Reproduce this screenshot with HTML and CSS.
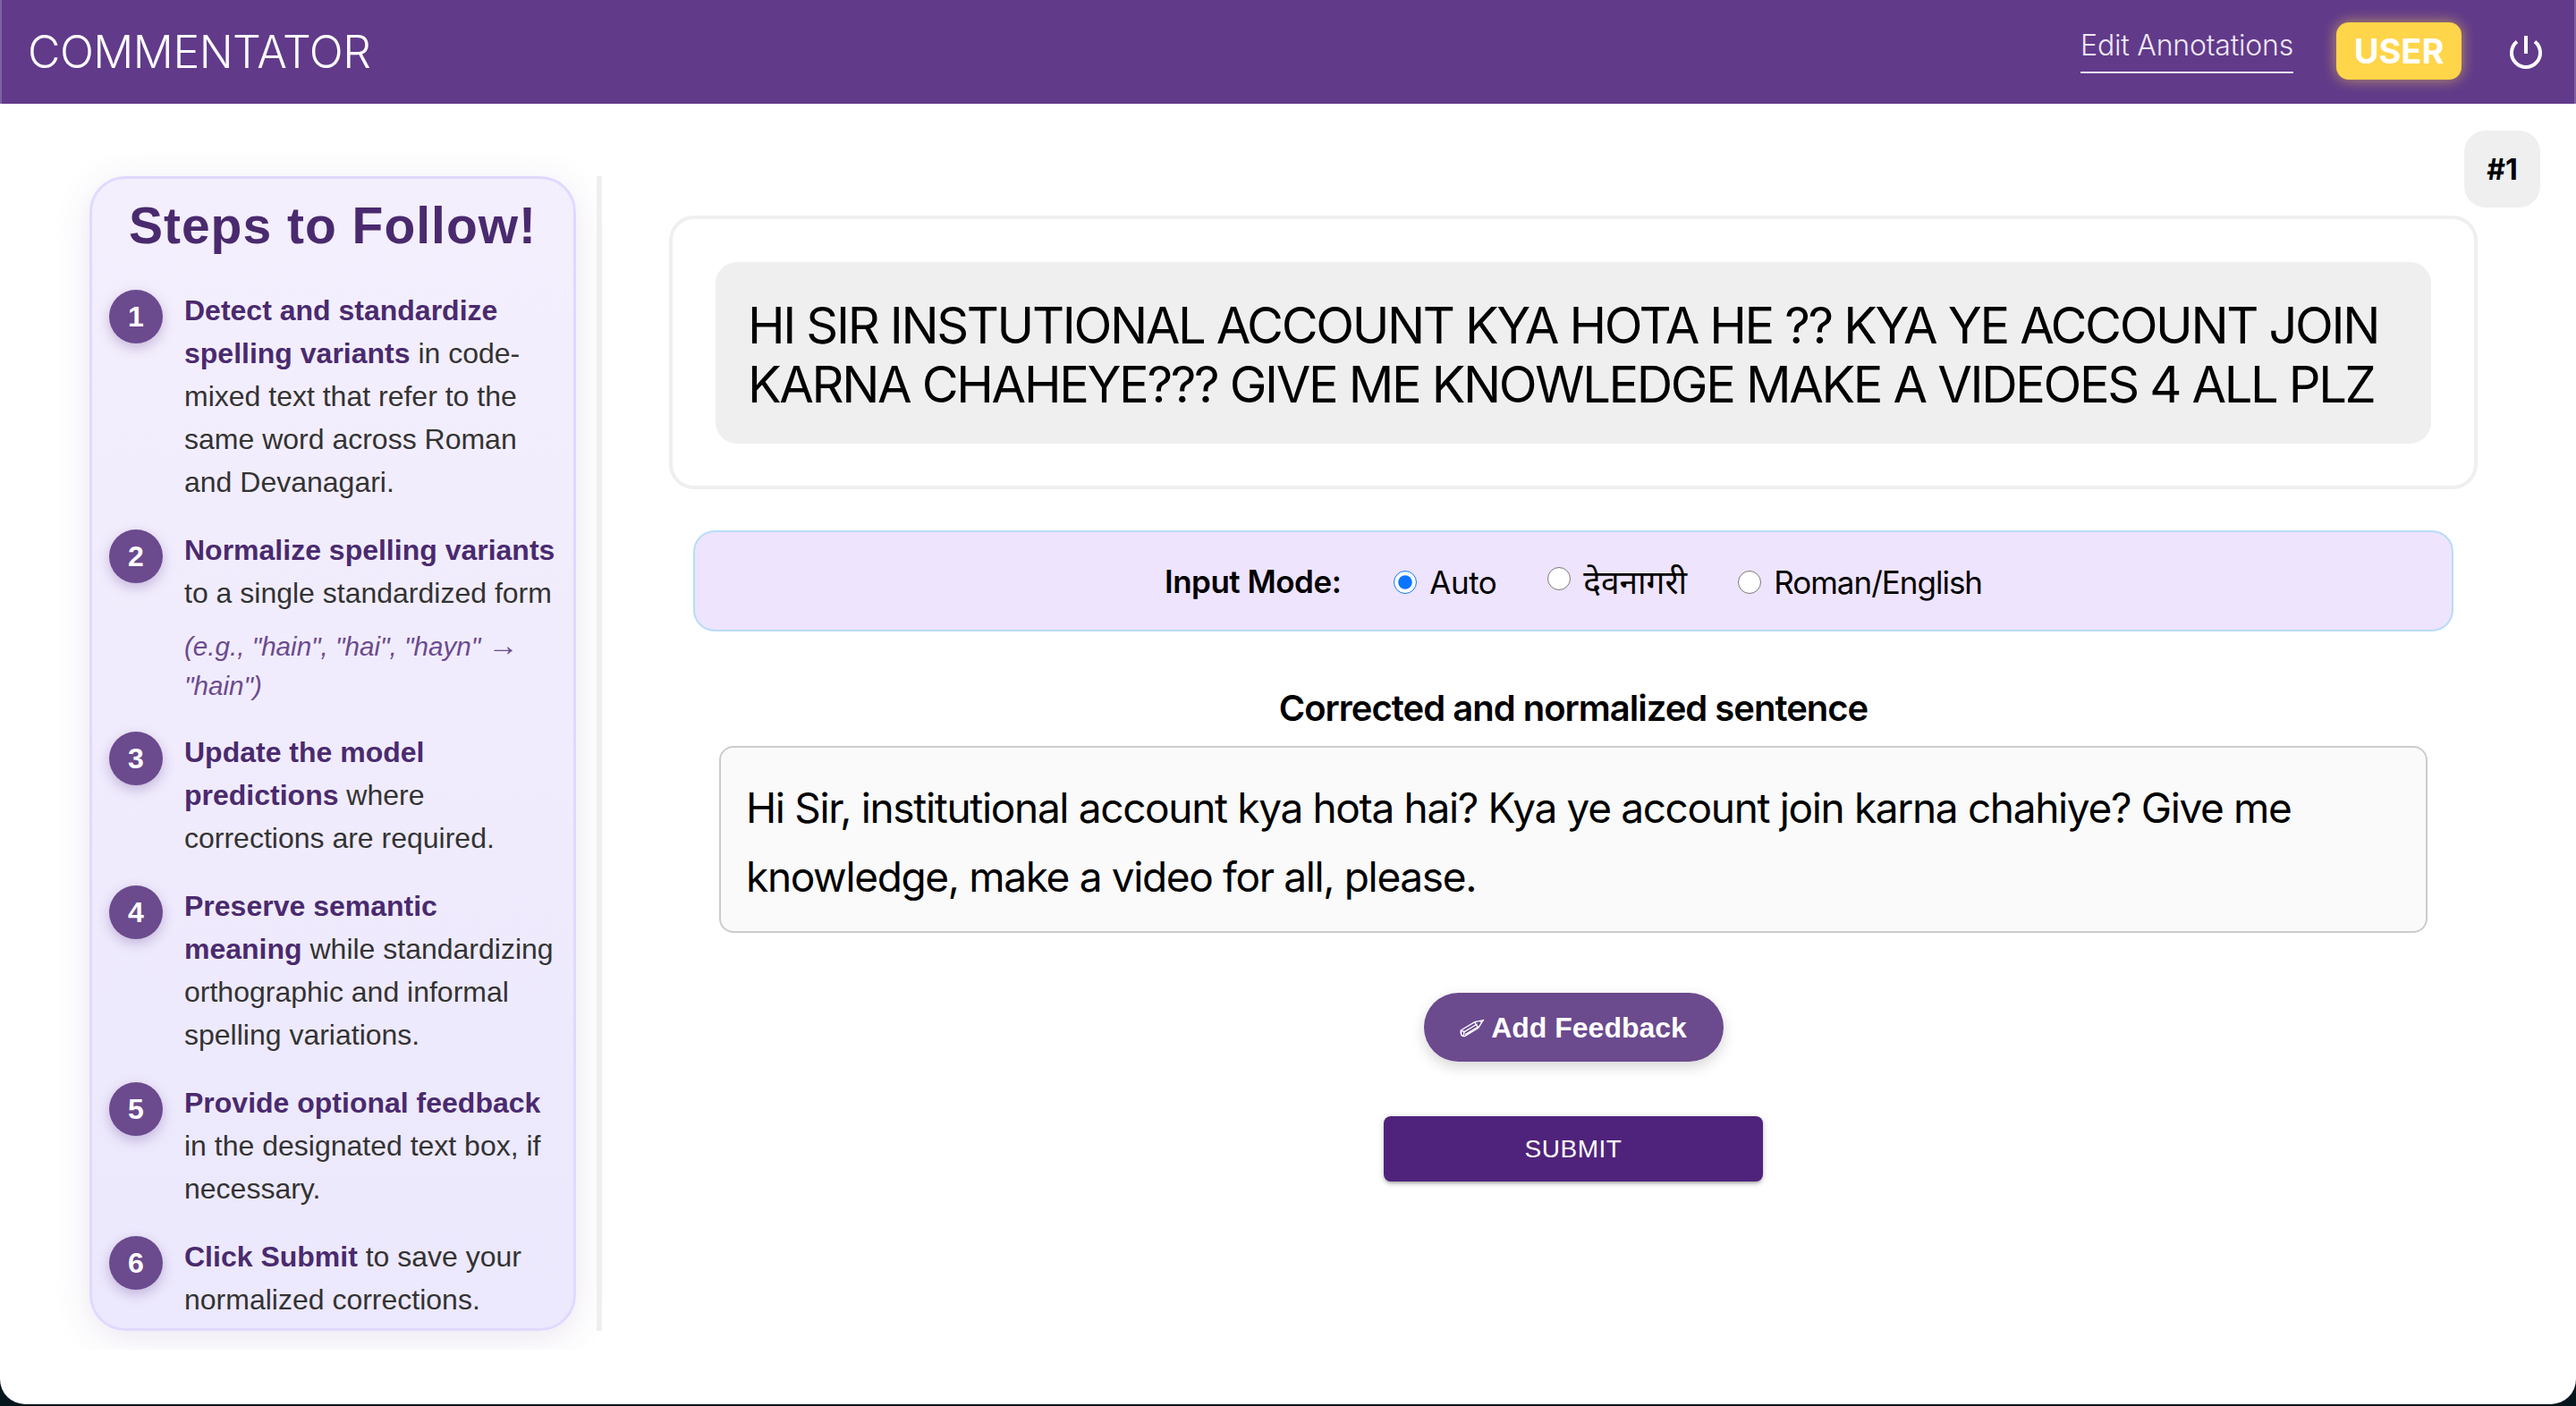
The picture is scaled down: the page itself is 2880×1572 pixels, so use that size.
FILE: index.html
```html
<!DOCTYPE html>
<html lang="en">
<head>
<meta charset="utf-8">
<title>Commentator</title>
<link rel="stylesheet" href="styles.css">
</head>
<body>
<div class="window">
  <header class="topbar">
    <div class="brand">COMMENTATOR</div>
    <nav class="topnav">
      <a class="navlink">Edit Annotations</a>
      <span class="role">USER</span>
      <svg class="power" viewBox="0 0 36 36" aria-hidden="true"><path d="M18 0v20" /><path d="M8 6.5A16 16 0 1 0 28 6.5" /></svg>
    </nav>
  </header>
  <main class="content">
    <aside class="side">
      <div class="steps">
        <h2 class="steps-title">Steps to Follow!</h2>
        <ol class="step-list">
          <li class="step"><span class="num">1</span><div class="step-text"><b>Detect and standardize spelling variants</b> in code-mixed text that refer to the same word across Roman and Devanagari.</div></li>
          <li class="step"><span class="num">2</span><div class="step-text"><b>Normalize spelling variants</b> to a single standardized form<em class="eg">(e.g., "hain", "hai", "hayn" <span class="arrow">→</span> "hain")</em></div></li>
          <li class="step"><span class="num">3</span><div class="step-text"><b>Update the model predictions</b> where corrections are required.</div></li>
          <li class="step"><span class="num">4</span><div class="step-text"><b>Preserve semantic meaning</b> while standardizing orthographic and informal spelling variations.</div></li>
          <li class="step"><span class="num">5</span><div class="step-text"><b>Provide optional feedback</b> in the designated text box, if necessary.</div></li>
          <li class="step"><span class="num">6</span><div class="step-text"><b>Click Submit</b> to save your normalized corrections.</div></li>
        </ol>
      </div>
    </aside>
    <section class="work">
      <div class="badge-row"><span class="badge">#1</span></div>
      <div class="source-card">
        <div class="source-text">HI SIR INSTUTIONAL ACCOUNT KYA HOTA HE ?? KYA YE ACCOUNT JOIN KARNA CHAHEYE??? GIVE ME KNOWLEDGE MAKE A VIDEOES 4 ALL PLZ</div>
      </div>
      <div class="mode">
        <span class="mode-label">Input Mode:</span>
        <label class="opt opt-auto"><input type="radio" name="m" checked>Auto</label>
        <label class="opt opt-hi"><input type="radio" name="m">देवनागरी</label>
        <label class="opt"><input type="radio" name="m">Roman/English</label>
      </div>
      <h3 class="out-label">Corrected and normalized sentence</h3>
      <div class="out-box">Hi Sir, institutional account kya hota hai? Kya ye account join karna chahiye? Give me knowledge, make a video for all, please.</div>
      <button class="feedback"><svg class="pencil" viewBox="0 0 80 60" aria-hidden="true"><path d="M3 36 50 8 78 2 62 28 17 55C9 59 1 50 3 36Z" /><path d="M11 43 58 15M18 50 64 23M50 8C52 14 58 22 62 28M78 2 68 9" /><ellipse cx="9" cy="46" rx="5" ry="8" /></svg><span class="fb-label">Add Feedback</span></button>
      <button class="submit">SUBMIT</button>
    </section>
  </main>
</div>
</body>
</html>
```
FILE: styles.css
```css
* { box-sizing: border-box; }
html, body { margin: 0; height: 100%; overflow: hidden; background: #03161c; }
.window {
  height: 1570px; background: #fff; border-radius: 0 0 28px 28px;
  font-family: Inter, "Noto Sans", sans-serif; color: #000; overflow: hidden;
}
.topbar {
  height: 116px; background: #613a8a; display: flex; align-items: center;
  justify-content: space-between; padding: 0 36px 0 31px;
  border-left: 2px solid #7d63a0; border-right: 2px solid #7d63a0;
}
.brand { font-size: 50px; font-weight: 300; color: #fff; letter-spacing: -0.5px; margin-left: -2px; }
.topnav { display: flex; align-items: center; }
.navlink {
  font-size: 32px; font-weight: 300; color: #efe8f5; border-bottom: 2px solid #efe8f5; letter-spacing: -0.2px;
  padding-bottom: 10px; margin-bottom: 4px; margin-right: 48px;
}
.role {
  width: 140px; height: 64px; display: flex; align-items: center; justify-content: center;
  background: #ffd54a; border-radius: 14px; color: #fff; font-weight: 700; font-size: 38px;
  box-shadow: 0 0 16px rgba(255, 213, 74, .6); margin-right: 54px; margin-top: -2px;
}
.power { width: 36px; height: 36px; fill: none; stroke: #fff; stroke-width: 4; overflow: visible; }
.content { display: flex; align-items: flex-start; }
.side {
  width: 674px; padding: 81px 0 21px 100px; overflow: hidden; flex: none; height: 1393px;
  position: relative;
}
.steps {
  width: 544px; height: 1291px; border: 3px solid #e0d9ff; border-radius: 40px;
  background: linear-gradient(#f4effd, #ece8fd); padding: 0 0 0 19px;
  box-shadow: 0 8px 40px rgba(97, 58, 138, .13);
}
.side::after { content: ""; position: absolute; left: 667px; top: 81px; width: 6px; height: 1291px; background: #efefef; }
.steps-title {
  margin: 20px 0 39px; font: 700 57px/64px "Liberation Sans", sans-serif; color: #4a2a6e;
  text-align: center; letter-spacing: 1px; padding-right: 19px;
}
.step-list { list-style: none; margin: 0; padding: 0; display: flex; flex-direction: column; gap: 28px; }
.step { display: flex; gap: 24px; }
.num {
  flex: none; width: 60px; height: 60px; border-radius: 50%; background: #6b4a8e; color: #fff; margin-top: 1px;
  display: flex; align-items: center; justify-content: center; font: 700 32px "Liberation Sans", sans-serif;
  box-shadow: 0 5px 14px rgba(97, 58, 138, .3);
}
.step-text { font: 400 32px/48px "Liberation Sans", sans-serif; color: #333; width: 418px; }
.step-text b { color: #4a2a6e; }
.eg { display: block; font-size: 29.6px; line-height: 44px; color: #6b4a8e; margin-top: 14px; }
.arrow { font-family: "Liberation Serif", serif; font-style: normal; font-size: 34px; line-height: 1; }
.work { flex: 1; min-width: 0; padding: 30px 110px 0 74px; display: flex; flex-direction: column; align-items: center; }
.badge-row { align-self: stretch; display: flex; justify-content: flex-end; height: 95px; margin-right: -70px; }
.badge {
  width: 85px; height: 86px; border-radius: 24px; background: #efefef; display: flex;
  align-items: center; justify-content: center; font-weight: 700; font-size: 32px;
}
.source-card {
  align-self: stretch; height: 306px; border: 4px solid #efefef; border-radius: 28px;
  padding: 48px;
}
.source-text {
  background: #efefef; border-radius: 24px; height: 203px; padding: 38px 36px 0; font-size: 56px; line-height: 66px; letter-spacing: -2.35px;
}
.mode {
  width: 1968px; height: 113px; margin-top: 46px; background: #eee4fd; border: 2px solid #b8dcf8;
  border-radius: 24px; display: flex; align-items: center; justify-content: center; font-size: 35px;
}
.mode-label { font-weight: 600; margin-right: 59px; letter-spacing: -0.5px; }
.opt { display: flex; align-items: center; margin-right: 57px; letter-spacing: -1px; padding-top: 2px; }
.opt:last-child { margin-right: 0; }
.opt input { width: 26px; height: 26px; margin: 0 14px 0 0; accent-color: #0a75ff; }
.opt-auto { letter-spacing: -0.5px; }
.opt-hi { font-size: 37px; letter-spacing: 0; padding-top: 0; }
.opt-hi input { position: relative; top: -3px; }
.out-label { margin: 62px 0 18px; font-size: 40px; font-weight: 600; line-height: 48px; letter-spacing: -1px; }
.out-box {
  width: 1910px; height: 209px; background: #fafafa; border: 2px solid #ccc; border-radius: 16px;
  padding: 29px 28px 0; font-size: 46px; line-height: 77px; letter-spacing: -1.35px;
}
.feedback {
  margin-top: 67px; height: 77px; width: 335px; border: 0; border-radius: 39px; background: #6b4a8e; color: #fff;
  font: 700 32px "Liberation Sans", sans-serif; box-shadow: 0 6px 16px rgba(0,0,0,.16);
  display: flex; align-items: center; justify-content: center; gap: 8px; padding: 2px 0 0;
}
.pencil { width: 27px; height: 20px; fill: none; stroke: #fff; stroke-width: 4; overflow: visible; }
.submit {
  margin-top: 61px; width: 424px; height: 73px; border: 0; border-radius: 8px; background: #4f237b; color: #fff;
  font: 400 28px "Liberation Sans", sans-serif; letter-spacing: .5px;
  box-shadow: 0 3px 3px -2px rgba(0,0,0,.2), 0 3px 4px rgba(0,0,0,.14), 0 1px 8px rgba(0,0,0,.12);
}
```
